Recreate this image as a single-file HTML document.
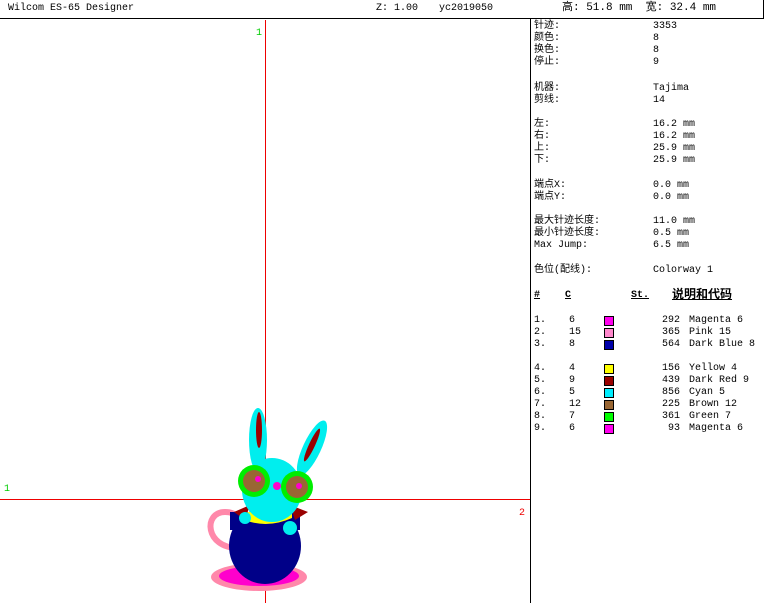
<!DOCTYPE html>
<html><head><meta charset="utf-8"><style>
*{margin:0;padding:0}
body{width:764px;height:603px;background:#fff;position:relative;overflow:hidden;font-family:"Liberation Mono","Noto Sans CJK SC",monospace;font-size:10px;line-height:12px;color:#000}
.t{position:absolute;white-space:pre}
.r{text-align:right}
.sw{position:absolute;width:8px;height:8px;border:1px solid #000}
</style></head><body>
<div style="position:absolute;left:0;top:0;width:764px;height:18px;border-bottom:1px solid #000"></div>
<div style="position:absolute;left:763px;top:0;width:1px;height:19px;background:#000"></div>
<div class="t" style="left:8px;top:3px">Wilcom ES-65 Designer</div>
<div class="t" style="left:376px;top:3px">Z: 1.00</div>
<div class="t" style="left:439px;top:3px">yc2019050</div>
<div class="t" style="left:562px;top:2px;font-size:11px">高: 51.8 mm  宽: 32.4 mm</div>
<div style="position:absolute;left:530px;top:19px;width:1px;height:584px;background:#000"></div>
<div style="position:absolute;left:265px;top:20px;width:1px;height:583px;background:#e00"></div>
<div style="position:absolute;left:0;top:499px;width:530px;height:1px;background:#e00"></div>
<div class="t" style="left:256px;top:28px;color:#0c0">1</div>
<div class="t" style="left:4px;top:484px;color:#0c0">1</div>
<div class="t" style="left:519px;top:508px;color:#e00">2</div>
<svg style="position:absolute;left:0;top:0" width="530" height="603">
<path d="M238 548 C205 548 203 512 225 512 C238 512 243 522 240 528" fill="none" stroke="#f8a" stroke-width="6"/>
<ellipse cx="259" cy="577" rx="48" ry="14" fill="#f8a"/>
<ellipse cx="259" cy="576" rx="40" ry="10" fill="#f0c"/>
<ellipse cx="265" cy="546" rx="36" ry="38" fill="#008"/>
<path d="M230 512 L300 512 L300 530 L230 530Z" fill="#008"/>
<path d="M240 518 Q265 530 292 518 L292 512 L240 512Z" fill="#ff0"/>
<path d="M234 512 L250 505 L245 520Z" fill="#900"/>
<path d="M290 505 L308 512 L295 520Z" fill="#900"/>
<ellipse cx="258" cy="440" rx="9" ry="32" fill="#0ee"/>
<ellipse cx="259" cy="430" rx="3" ry="18" fill="#900"/>
<ellipse cx="312" cy="448" rx="9" ry="30" fill="#0ee" transform="rotate(25 312 448)"/>
<ellipse cx="312" cy="445" rx="3" ry="18" fill="#900" transform="rotate(25 312 445)"/>
<ellipse cx="272" cy="490" rx="30" ry="32" fill="#0ee"/>
<circle cx="245" cy="518" r="6" fill="#0ee"/><circle cx="290" cy="528" r="7" fill="#0ee"/>
<circle cx="254" cy="481" r="16" fill="#0e0"/><circle cx="254" cy="481" r="11" fill="#963"/>
<circle cx="297" cy="487" r="16" fill="#0e0"/><circle cx="297" cy="487" r="11" fill="#963"/>
<circle cx="258" cy="479" r="3" fill="#f0c"/><circle cx="299" cy="486" r="3" fill="#f0c"/>
<circle cx="277" cy="486" r="4" fill="#f0c"/>
</svg>
<div class="t" style="left:534px;top:21px">针迹:
颜色:
换色:
停止:</div>
<div class="t" style="left:653px;top:21px">3353
8
8
9</div>
<div class="t" style="left:534px;top:83px">机器:
剪线:</div>
<div class="t" style="left:653px;top:83px">Tajima
14</div>
<div class="t" style="left:534px;top:119px">左:
右:
上:
下:</div>
<div class="t" style="left:653px;top:119px">16.2 mm
16.2 mm
25.9 mm
25.9 mm</div>
<div class="t" style="left:534px;top:180px">端点X:
端点Y:</div>
<div class="t" style="left:653px;top:180px">0.0 mm
0.0 mm</div>
<div class="t" style="left:534px;top:216px">最大针迹长度:
最小针迹长度:
Max Jump:</div>
<div class="t" style="left:653px;top:216px">11.0 mm
0.5 mm
6.5 mm</div>
<div class="t" style="left:534px;top:265px">色位(配线):</div>
<div class="t" style="left:653px;top:265px">Colorway 1</div>
<div class="t" style="left:534px;top:290px;font-weight:bold;text-decoration:underline">#</div>
<div class="t" style="left:565px;top:290px;font-weight:bold;text-decoration:underline">C</div>
<div class="t" style="left:631px;top:290px;font-weight:bold;text-decoration:underline">St.</div>
<div class="t" style="left:672px;top:289px;font-weight:bold;text-decoration:underline;font-size:12px">说明和代码</div>
<div class="t" style="left:534px;top:315px">1.
2.
3.

4.
5.
6.
7.
8.
9.</div>
<div class="t" style="left:569px;top:315px">6
15
8

4
9
5
12
7
6</div>
<div class="t r" style="left:640px;top:315px;width:40px">292
365
564

156
439
856
225
361
93</div>
<div class="t" style="left:689px;top:315px">Magenta 6
Pink 15
Dark Blue 8

Yellow 4
Dark Red 9
Cyan 5
Brown 12
Green 7
Magenta 6</div>
<div class="sw" style="left:604px;top:316px;background:#f0e"></div>
<div class="sw" style="left:604px;top:328px;background:#f8c"></div>
<div class="sw" style="left:604px;top:340px;background:#00a"></div>
<div class="sw" style="left:604px;top:364px;background:#ff0"></div>
<div class="sw" style="left:604px;top:376px;background:#900"></div>
<div class="sw" style="left:604px;top:388px;background:#0ef"></div>
<div class="sw" style="left:604px;top:400px;background:#963"></div>
<div class="sw" style="left:604px;top:412px;background:#0f0"></div>
<div class="sw" style="left:604px;top:424px;background:#f0e"></div>
</body></html>
